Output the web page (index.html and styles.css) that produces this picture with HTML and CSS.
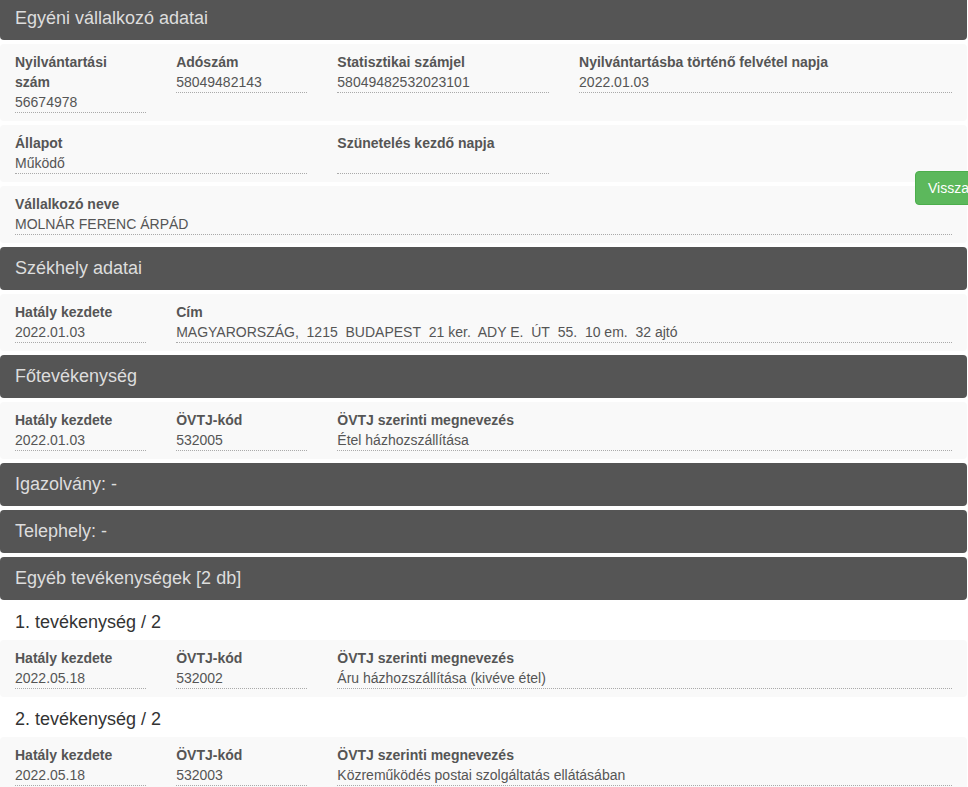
FILE: index.html
```html
<!DOCTYPE html>
<html lang="hu">
<head>
    <meta charset="UTF-8">
    <meta name="viewport" content="width=device-width, initial-scale=1.0">
    <title>Egyéni vállalkozó adatai</title>
    <link rel="stylesheet" href="styles.css">
</head>
<body>
    <div class="page">
        <!-- Alapadatok -->
        <h3 class="section-title">Egyéni vállalkozó adatai</h3>
        <div class="row">
            <div class="col col-2">
                <div class="label">Nyilvántartási<br>szám</div>
                <div class="value">56674978</div>
            </div>
            <div class="col col-2">
                <div class="label">Adószám</div>
                <div class="value">58049482143</div>
            </div>
            <div class="col col-3">
                <div class="label">Statisztikai számjel</div>
                <div class="value">58049482532023101</div>
            </div>
            <div class="col col-5">
                <div class="label">Nyilvántartásba történő felvétel napja</div>
                <div class="value">2022.01.03</div>
            </div>
        </div>
        <div class="row">
            <div class="col col-4">
                <div class="label">Állapot</div>
                <div class="value">Működő</div>
            </div>
            <div class="col col-3">
                <div class="label">Szünetelés kezdő napja</div>
                <div class="value"></div>
            </div>
        </div>
        <div class="row">
            <div class="col col-12">
                <div class="label">Vállalkozó neve</div>
                <div class="value">MOLNÁR FERENC ÁRPÁD</div>
            </div>
        </div>

        <!-- Székhely -->
        <h3 class="section-title">Székhely adatai</h3>
        <div class="row">
            <div class="col col-2">
                <div class="label">Hatály kezdete</div>
                <div class="value">2022.01.03</div>
            </div>
            <div class="col col-10">
                <div class="label">Cím</div>
                <div class="value">MAGYARORSZÁG,&nbsp; 1215&nbsp; BUDAPEST&nbsp; 21 ker.&nbsp; ADY E.&nbsp; ÚT&nbsp; 55.&nbsp; 10 em.&nbsp; 32 ajtó</div>
            </div>
        </div>

        <!-- Főtevékenység -->
        <h3 class="section-title">Főtevékenység</h3>
        <div class="row">
            <div class="col col-2">
                <div class="label">Hatály kezdete</div>
                <div class="value">2022.01.03</div>
            </div>
            <div class="col col-2">
                <div class="label">ÖVTJ-kód</div>
                <div class="value">532005</div>
            </div>
            <div class="col col-8">
                <div class="label">ÖVTJ szerinti megnevezés</div>
                <div class="value">Étel házhozszállítása</div>
            </div>
        </div>

        <h3 class="section-title">Igazolvány: -</h3>
        <h3 class="section-title">Telephely: -</h3>

        <!-- Egyéb tevékenységek -->
        <h3 class="section-title">Egyéb tevékenységek [2 db]</h3>
        <h4 class="sub-title">1. tevékenység / 2</h4>
        <div class="row">
            <div class="col col-2">
                <div class="label">Hatály kezdete</div>
                <div class="value">2022.05.18</div>
            </div>
            <div class="col col-2">
                <div class="label">ÖVTJ-kód</div>
                <div class="value">532002</div>
            </div>
            <div class="col col-8">
                <div class="label">ÖVTJ szerinti megnevezés</div>
                <div class="value">Áru házhozszállítása (kivéve étel)</div>
            </div>
        </div>
        <h4 class="sub-title">2. tevékenység / 2</h4>
        <div class="row">
            <div class="col col-2">
                <div class="label">Hatály kezdete</div>
                <div class="value">2022.05.18</div>
            </div>
            <div class="col col-2">
                <div class="label">ÖVTJ-kód</div>
                <div class="value">532003</div>
            </div>
            <div class="col col-8">
                <div class="label">ÖVTJ szerinti megnevezés</div>
                <div class="value">Közreműködés postai szolgáltatás ellátásában</div>
            </div>
        </div>
    </div>

    <a href="#" class="btn-back">Vissza</a>
</body>
</html>
```

FILE: styles.css
```css
html, body {
    overflow: hidden;
}
body {
    font-family: "Liberation Sans", Arial, sans-serif;
    font-size: 14px;
    color: #555;
    background-color: #fff;
    margin: 0;
    padding: 0;
}
.page {
    width: 967px;
    margin-top: -3px;
}
.section-title {
    background-color: #555;
    color: #ddd;
    font-size: 18px;
    font-weight: normal;
    line-height: 23px;
    margin: 0 0 4px 0;
    padding: 10px 15px;
    border-radius: 4px;
}
.sub-title {
    color: #333;
    font-size: 18px;
    font-weight: normal;
    line-height: 36px;
    height: 36px;
    margin: 0;
    padding: 0 15px;
}
.row {
    display: flex;
    background-color: #f9f9f9;
    border-radius: 4px;
    padding: 8px 0;
    margin-bottom: 4px;
}
.col {
    box-sizing: border-box;
    padding: 0 15px;
}
.col-2 { width: 16.6667%; }
.col-3 { width: 25%; }
.col-4 { width: 33.3333%; }
.col-5 { width: 41.6667%; }
.col-8 { width: 66.6667%; }
.col-10 { width: 83.3333%; }
.col-12 { width: 100%; }
.label {
    font-weight: bold;
    line-height: 20px;
}
.value {
    line-height: 20px;
    min-height: 20px;
    border-bottom: 1px dotted #aaa;
    white-space: nowrap;
}
.btn-back {
    position: absolute;
    top: 171px;
    left: 915px;
    background-color: #5cb85c;
    border: 1px solid #4cae4c;
    color: white;
    padding: 6px 12px;
    line-height: 20px;
    border-radius: 4px;
    text-decoration: none;
    font-size: 14px;
}
.btn-back:hover {
    background-color: #449d44;
}
```
